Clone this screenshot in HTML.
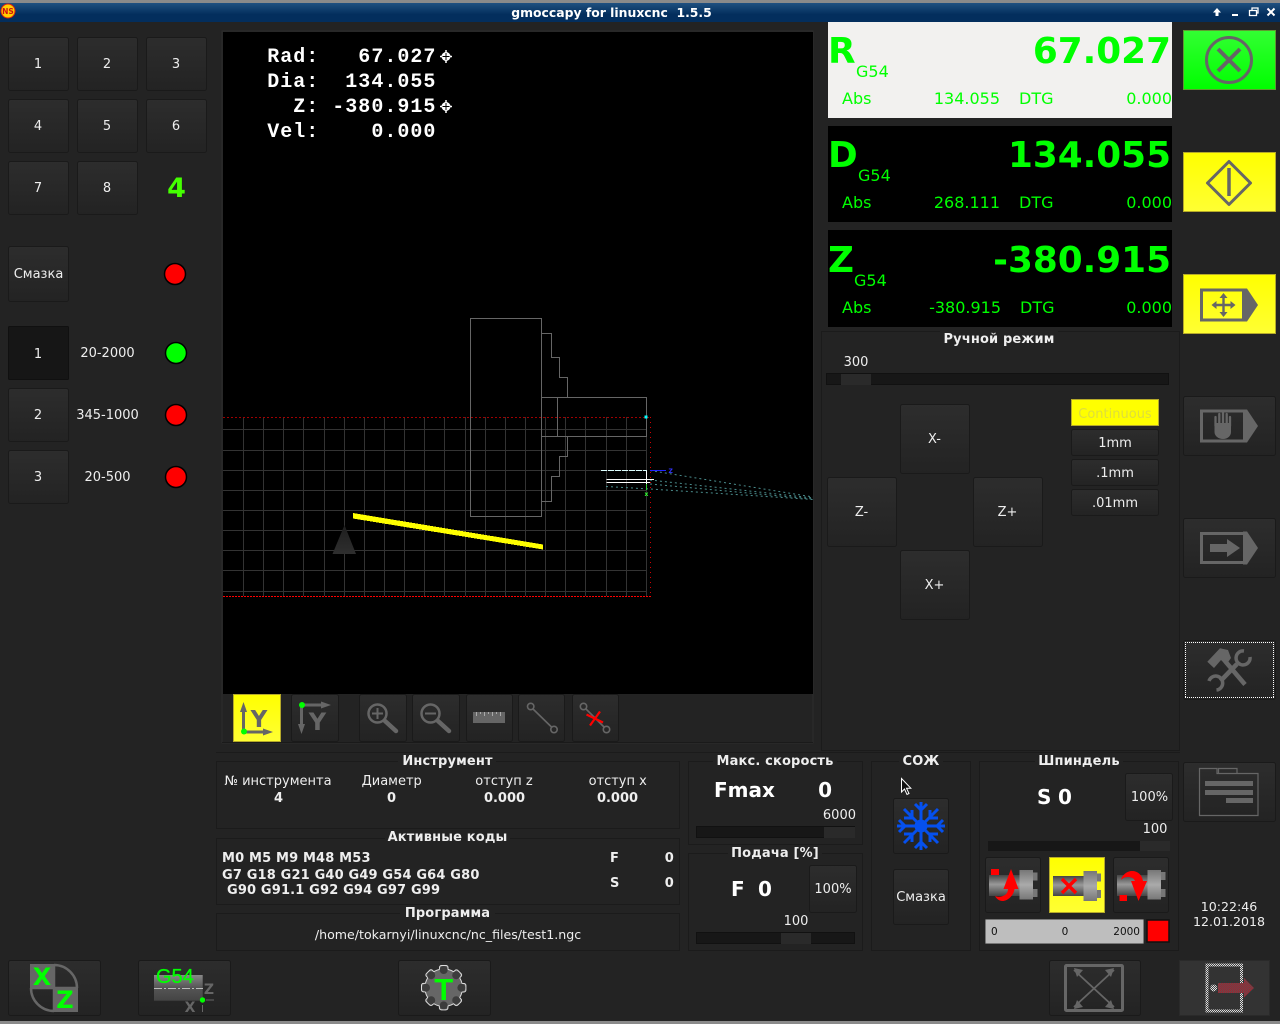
<!DOCTYPE html>
<html><head><meta charset="utf-8"><title>gmoccapy for linuxcnc</title>
<style>
html,body{margin:0;padding:0;background:#232323;width:1280px;height:1024px;overflow:hidden}
svg{display:block;font-family:"DejaVu Sans","Liberation Sans",sans-serif}
.t{font-size:13px;fill:#eee}
.m{text-anchor:middle}
.e{text-anchor:end}
.b{font-weight:bold}
.h{font-size:13px;font-weight:bold;fill:#eee;text-anchor:middle;letter-spacing:.15px}
.btn{fill:url(#bg);stroke:#1a1a1a;stroke-width:1}
.fr{fill:none;stroke:#1b1b1b;stroke-width:1}
.big{font-size:35.8px;font-weight:bold;fill:#0f0}
.sm{font-size:16px;fill:#0f0}
.ab{font-size:16px;fill:#0f0}
.ov{font-family:"Liberation Mono",monospace;font-size:20px;font-weight:bold;fill:#fff;letter-spacing:1px;white-space:pre}
.i{fill:#666}
.is{fill:none;stroke:#666}
</style></head><body>
<svg width="1280" height="1024" viewBox="0 0 1280 1024" xmlns="http://www.w3.org/2000/svg">
<defs>
<linearGradient id="bg" x1="0" y1="0" x2="0" y2="1"><stop offset="0" stop-color="#2d2d2d"/><stop offset="1" stop-color="#232323"/></linearGradient>
<linearGradient id="title" x1="0" y1="0" x2="0" y2="1"><stop offset="0" stop-color="#1f5080"/><stop offset=".6" stop-color="#032e5d"/><stop offset="1" stop-color="#032e5d"/></linearGradient>
<linearGradient id="gr" x1="0" y1="0" x2="0" y2="1"><stop offset="0" stop-color="#3f3"/><stop offset="1" stop-color="#0f0"/></linearGradient>
<linearGradient id="ye" x1="0" y1="0" x2="0" y2="1"><stop offset="0" stop-color="#ff0"/><stop offset="1" stop-color="#ff3"/></linearGradient>
<linearGradient id="cyl" x1="0" y1="0" x2="0" y2="1"><stop offset="0" stop-color="#444"/><stop offset=".45" stop-color="#999"/><stop offset="1" stop-color="#444"/></linearGradient>
<linearGradient id="disc" x1="0" y1="0" x2="0" y2="1"><stop offset="0" stop-color="#777"/><stop offset=".5" stop-color="#aaa"/><stop offset="1" stop-color="#777"/></linearGradient>
<linearGradient id="g54" x1="0" y1="0" x2="0" y2="1"><stop offset="0" stop-color="#888"/><stop offset=".5" stop-color="#555"/><stop offset="1" stop-color="#444"/></linearGradient>
<linearGradient id="cone" x1="0" y1="0" x2="0" y2="1"><stop offset="0" stop-color="#1e1e1e"/><stop offset="1" stop-color="#2e2e2e"/></linearGradient>
<pattern id="chk" width="2" height="2" patternUnits="userSpaceOnUse"><rect width="2" height="2" fill="#444"/><rect width="1" height="1" fill="#ddd"/><rect x="1" y="1" width="1" height="1" fill="#ddd"/></pattern>
<pattern id="chr" width="2" height="2" patternUnits="userSpaceOnUse"><rect width="2" height="2" fill="#555"/><rect width="1" height="1" fill="#b01828"/><rect x="1" y="1" width="1" height="1" fill="#b01828"/></pattern>
</defs>

<rect width="1280" height="1024" fill="#232323"/>
<!-- title bar -->
<rect width="1280" height="3" fill="#8a8a8a"/>
<rect y="3" width="1280" height="19" fill="url(#title)"/>
<circle cx="8" cy="11" r="7" fill="#ffd000" stroke="#e02010" stroke-width="1"/>
<text x="8" y="14" font-size="7.500" font-weight="bold" fill="#d01010" text-anchor="middle">NS</text>
<text x="611.500" y="17" font-size="12.400px" font-weight="bold" fill="#fff" text-anchor="middle" style="white-space:pre">gmoccapy for linuxcnc  1.5.5</text>
<path d="M1217 8l4 4.500h-2.500v3.500h-3v-3.500h-2.500z" fill="#fff"/>
<rect x="1232" y="14" width="6" height="2" fill="#fff"/>
<path d="M1249.500 10.500h7v5h-7zM1252 10.500v-2.500h6v5h-1.500" fill="none" stroke="#fff" stroke-width="1.300"/>
<path d="M1267.500 8.500l7 7M1274.500 8.500l-7 7" stroke="#fff" stroke-width="2"/>

<!-- left buttons -->
<g class="btn">
<rect x="8.500" y="37.500" width="60" height="53" rx="2"/><rect x="77.500" y="37.500" width="60" height="53" rx="2"/><rect x="146.500" y="37.500" width="60" height="53" rx="2"/>
<rect x="8.500" y="99.500" width="60" height="53" rx="2"/><rect x="77.500" y="99.500" width="60" height="53" rx="2"/><rect x="146.500" y="99.500" width="60" height="53" rx="2"/>
<rect x="8.500" y="161.500" width="60" height="53" rx="2"/><rect x="77.500" y="161.500" width="60" height="53" rx="2"/>
<rect x="8.500" y="246.500" width="60" height="55" rx="2"/>
<rect x="8.500" y="388.500" width="60" height="53" rx="2"/><rect x="8.500" y="450.500" width="60" height="53" rx="2"/>
</g>
<rect x="8.500" y="326.500" width="60" height="53" rx="1" fill="#161616" stroke="#101010"/>
<g class="t m">
<text x="38" y="68">1</text><text x="107" y="68">2</text><text x="176" y="68">3</text>
<text x="38" y="130">4</text><text x="107" y="130">5</text><text x="176" y="130">6</text>
<text x="38" y="192">7</text><text x="107" y="192">8</text>
<text x="38.500" y="278">Смазка</text>
<text x="38" y="358">1</text><text x="38" y="419">2</text><text x="38" y="481">3</text>
<text x="107.500" y="357">20-2000</text><text x="107.500" y="419">345-1000</text><text x="107.500" y="481">20-500</text>
</g>
<text x="176.500" y="197" font-size="27px" font-weight="bold" fill="#4f0" text-anchor="middle">4</text>
<g stroke="#000" stroke-width="1.500">
<circle cx="175" cy="274" r="10.500" fill="#f00"/>
<circle cx="176" cy="353" r="10.500" fill="#0f0"/>
<circle cx="176" cy="415" r="10.500" fill="#f00"/>
<circle cx="176" cy="477" r="10.500" fill="#f00"/>
</g>

<!-- viewport -->
<rect x="222" y="31" width="591" height="712" fill="none" stroke="#2c2c2c"/>
<rect x="223" y="32" width="590" height="662" fill="#000"/>
<path shape-rendering="crispEdges" stroke="#333" fill="none" d="M243.500 417V596M263.500 417V596M283.500 417V596M303.500 417V596M324.500 417V596M344.500 417V596M364.500 417V596M384.500 417V596M404.500 417V596M424.500 417V596M444.500 417V596M465.500 417V596M485.500 417V596M505.500 417V596M525.500 417V596M545.500 417V596M565.500 417V596M585.500 417V596M606.500 417V596M626.500 417V596M646.500 417V596M223 429.500H647M223 450.500H647M223 470.500H647M223 490.500H647M223 510.500H647M223 530.500H647M223 550.500H647M223 570.500H647M223 591.500H647"/>
<path shape-rendering="crispEdges" fill="none" stroke="#a00000" stroke-dasharray="2 2" d="M223 417.500H650.500"/>
<path shape-rendering="crispEdges" fill="none" stroke="#d00000" stroke-dasharray="1 4" d="M650.500 417V596"/>
<path shape-rendering="crispEdges" fill="none" stroke="#ff0000" stroke-dasharray="2 1" d="M223 596.500H651"/>
<path shape-rendering="crispEdges" fill="none" stroke="#666" d="M470.500 318.500H541.500V516.500H470.500ZM541.500 333.500H551.500V357.500H559.500V377.500H567.500V397.500M541.500 397.500H646.500V436.500H541.500M557.500 397.500V436.500M567.500 436.500V456.500H559.500V476.500H551.500V501.500H541.500"/>
<rect x="644.500" y="415.500" width="3" height="3" fill="#0ff"/>
<polygon points="353,513 543,544.500 543,549.500 353,518.500" fill="#ff0" shape-rendering="crispEdges"/>
<polygon points="344.500,525 356,554 332.500,554" fill="url(#cone)"/>
<g fill="none" stroke-width="1" stroke-dasharray="2 3" stroke="#4a8c8c">
<path d="M650 470.500L813 497"/><path d="M650 480L813 498"/><path d="M650 484L813 499"/><path d="M606 486.500L650 489L813 499.500"/>
</g>
<path shape-rendering="crispEdges" fill="none" stroke="#dff" stroke-dasharray="6 1" d="M601 470.500H647"/>
<path shape-rendering="crispEdges" fill="none" stroke="#fff" d="M646.500 471V484M606.500 479.500H654M606.500 482.500H650"/>
<path shape-rendering="crispEdges" fill="none" stroke="#3c3" d="M646.500 484V490"/>
<path shape-rendering="crispEdges" fill="none" stroke="#22f" d="M650 470.500H666"/>
<text x="668.500" y="473" font-size="6px" fill="#33f" font-weight="bold">Z</text>
<text x="644.500" y="496" font-size="6px" fill="#3f3" font-weight="bold">x</text>
<text class="ov" x="267.300" y="62" xml:space="preserve">Rad:   67.027</text>
<text class="ov" x="267.300" y="87" xml:space="preserve">Dia:  134.055</text>
<text class="ov" x="267.300" y="112" xml:space="preserve">  Z: -380.915</text>
<text class="ov" x="267.300" y="137" xml:space="preserve">Vel:    0.000</text>
<g fill="#fff"><circle cx="446" cy="56.500" r="4.500"/><circle cx="446" cy="106.500" r="4.500"/></g>
<path d="M446 50v13M440 56.500h12M446 100v13M440 106.500h12" stroke="#fff" stroke-width="1.500"/>
<path d="M446 53v7M442.500 56.500h7M446 103v7M442.500 106.500h7" stroke="#000" stroke-width="1"/>

<!-- view toolbar -->
<path shape-rendering="crispEdges" stroke="#1a1a1a" d="M222 742.500H813"/>
<rect x="233.500" y="694.500" width="47" height="47" fill="url(#ye)" stroke="#b5a92a"/>
<g class="btn">
<rect x="291.500" y="694.500" width="47" height="47" rx="2"/><rect x="359.500" y="694.500" width="47" height="47" rx="2"/><rect x="412.500" y="694.500" width="47" height="47" rx="2"/><rect x="466.500" y="694.500" width="46" height="47" rx="2"/><rect x="518.500" y="694.500" width="46" height="47" rx="2"/><rect x="572.500" y="694.500" width="46" height="47" rx="2"/>
</g>
<!-- Y icons -->
<path d="M243.500 731V709" stroke="#666" stroke-width="3"/><path d="M243.500 702l3.500 10h-7z" class="i"/>
<path d="M244 732h22" stroke="#666" stroke-width="3"/><path d="M273 732l-10 3.500v-7z" class="i"/>
<text x="259" y="727" font-size="23px" font-weight="bold" fill="#666" text-anchor="middle">Y</text>
<circle cx="244" cy="731.500" r="3" fill="#0f0"/>
<path d="M302 705h21" stroke="#666" stroke-width="3"/><path d="M331 705l-10 3.500v-7z" class="i"/>
<path d="M301.500 705v21" stroke="#666" stroke-width="3"/><path d="M301.500 734l-3.500-10h7z" class="i"/>
<text x="317.500" y="730" font-size="24px" font-weight="bold" fill="#666" text-anchor="middle">Y</text>
<circle cx="302" cy="705" r="3" fill="#0f0"/>
<!-- zoom -->
<g fill="none" stroke="#666">
<circle cx="377.500" cy="713.500" r="9" stroke-width="2.500"/><path d="M372 713.500h11M377.500 708v11" stroke-width="2"/><path d="M385 721l11 10" stroke-width="4.500" stroke-linecap="round"/>
<circle cx="430.500" cy="713.500" r="9" stroke-width="2.500"/><path d="M425 713.500h11" stroke-width="2"/><path d="M438 721l11 10" stroke-width="4.500" stroke-linecap="round"/>
<circle cx="530.700" cy="706.500" r="3.200" stroke-width="1.600"/><circle cx="554" cy="729.500" r="3.200" stroke-width="1.600"/><path d="M533 709l18.500 18" stroke-width="1.600"/>
<circle cx="583.500" cy="706.500" r="3.200" stroke-width="1.600"/><circle cx="606.500" cy="729.500" r="3.200" stroke-width="1.600"/><path d="M586 709l18 18" stroke-width="1.600"/>
</g>
<rect x="473" y="712" width="32" height="11" class="i"/>
<path d="M476.500 712v4M480.500 712v2M484.500 712v4M488.500 712v2M492.500 712v4M496.500 712v2M500.500 712v4" stroke="#aaa" stroke-width="1"/>
<path d="M586.500 714.500l16.500 8M600 711.500l-10 14" stroke="#f00" stroke-width="2.200"/>

<!-- DRO -->
<rect x="828" y="22" width="344" height="96" fill="#f2f1ef"/>
<rect x="828" y="126" width="344" height="96" fill="#000"/>
<rect x="828" y="230" width="344" height="97" fill="#000"/>
<text class="big" x="828" y="63">R</text><text class="big e" x="1171" y="63">67.027</text>
<text class="sm" x="856" y="77">G54</text><text class="ab" x="842" y="104">Abs</text><text class="ab e" x="1000" y="104">134.055</text><text class="ab" x="1019" y="104">DTG</text><text class="ab e" x="1172" y="104">0.000</text>
<text class="big" x="828" y="167">D</text><text class="big e" x="1171" y="167">134.055</text>
<text class="sm" x="858" y="181">G54</text><text class="ab" x="842" y="208">Abs</text><text class="ab e" x="1000" y="208">268.111</text><text class="ab" x="1019" y="208">DTG</text><text class="ab e" x="1172" y="208">0.000</text>
<text class="big" x="828" y="272">Z</text><text class="big e" x="1171" y="272">-380.915</text>
<text class="sm" x="854" y="286">G54</text><text class="ab" x="842" y="313">Abs</text><text class="ab e" x="1001" y="313">-380.915</text><text class="ab" x="1020" y="313">DTG</text><text class="ab e" x="1172" y="313">0.000</text>

<!-- right column -->
<rect x="1183.500" y="30.500" width="92" height="59" fill="url(#gr)" stroke="#5f9a30"/>
<circle cx="1229" cy="60" r="22.500" fill="none" stroke="#666" stroke-width="3"/>
<path d="M1218 49l22 22M1240 49l-22 22" stroke="#666" stroke-width="4"/>
<rect x="1183.500" y="152.500" width="92" height="59" fill="url(#ye)" stroke="#b5a92a"/>
<path d="M1229 161.500L1250.500 183L1229 204.500L1207.500 183Z" fill="none" stroke="#666" stroke-width="3" stroke-linejoin="round"/>
<path d="M1229 168V196" stroke="#666" stroke-width="3.500"/>
<rect x="1183.500" y="274.500" width="92" height="59" fill="url(#ye)" stroke="#b5a92a"/>
<path d="M1201.500 290h42v30h-42z" fill="none" stroke="#666" stroke-width="3"/>
<path d="M1243 288.500h4l11 16.500-11 16.500h-4z" class="i"/>
<path d="M1223.500 293l4 5h-2.800v5.800h5.800v-2.800l5 4-5 4v-2.800h-5.800v5.800h2.800l-4 5-4-5h2.800v-5.800h-5.800v2.800l-5-4 5-4v2.800h5.800v-5.800h-2.800z" class="i"/>

<g class="btn">
<rect x="1183.500" y="396.500" width="92" height="59" rx="2"/><rect x="1183.500" y="518.500" width="92" height="59" rx="2"/><rect x="1183.500" y="640.500" width="92" height="59" rx="2"/><rect x="1183.500" y="762.500" width="92" height="59" rx="2"/>
</g>
<path d="M1201.500 411h43v30h-43z" fill="none" stroke="#666" stroke-width="3"/>
<path d="M1243 409.500h4l11 16.500-11 16.500h-4z" class="i"/>
<!-- hand -->
<path d="M1214.500 423h16.500v9c0 4-3.500 7-8 7s-8.500-3-8.500-7z" class="i"/>
<path d="M1215.500 426v-9M1219.300 426v-12M1223 426v-13M1226.700 426v-12M1230 426v-9" stroke="#666" stroke-width="2.300" fill="none" stroke-linecap="round"/>
<path d="M1201.500 533.500h43v29h-43z" fill="none" stroke="#666" stroke-width="3"/>
<path d="M1243 531.500h4l11 16.500-11 16.500h-4z" class="i"/>
<path d="M1210 544h17v-5l13 9-13 9v-5h-17z" class="i"/>

<!-- focus dotted -->
<path shape-rendering="crispEdges" fill="none" stroke="#fff" stroke-dasharray="1 1" d="M1185 642.500H1274M1185 697.500H1274M1185.500 642V698M1273.500 642V698"/>
<!-- tools -->
<path d="M1225 661L1245 684.500" stroke="#666" stroke-width="4.500" fill="none"/>
<path d="M1207.300 661.700L1220 648.300 1228 650 1231 658 1226 665 1221 660 1214 668z" class="i"/>
<path d="M1237 664L1220.500 681" stroke="#666" stroke-width="4.500" fill="none"/>
<path d="M1244 651A7 7 0 1 0 1250 657" fill="none" stroke="#666" stroke-width="3.500"/>
<path d="M1209 681A7 7 0 1 1 1216.500 690" fill="none" stroke="#666" stroke-width="3.500"/>
<!-- folder -->
<path d="M1199.500 815.500V768.500H1217V773.500H1258V815.500Z M1218.500 773V768.500H1237V773" fill="none" stroke="#666" stroke-width="1.200"/>
<rect x="1205" y="781" width="48" height="5" class="i"/><rect x="1205" y="790" width="48" height="5" class="i"/><rect x="1226" y="798" width="27" height="5" class="i"/>

<text class="t" style="font-size:12.600px" x="1229" y="911" text-anchor="middle">10:22:46</text>
<text class="t" style="font-size:12.600px" x="1229" y="926" text-anchor="middle">12.01.2018</text>

<!-- jog panel -->
<rect x="821.500" y="331.500" width="358" height="419" class="fr"/>
<rect x="940" y="331" width="118" height="8" fill="#232323"/>
<text class="h" x="999" y="343">Ручной режим</text>
<text class="t m" x="856" y="366">300</text>
<rect x="826.500" y="373.500" width="342" height="11" fill="#171717" stroke="#111"/>
<rect x="841" y="374" width="30" height="11" fill="#2a2a2a"/>
<g class="btn">
<rect x="900.500" y="404.500" width="69" height="69" rx="2"/><rect x="827.500" y="477.500" width="69" height="69" rx="2"/><rect x="973.500" y="477.500" width="69" height="69" rx="2"/><rect x="900.500" y="550.500" width="69" height="69" rx="2"/>
<rect x="1071.500" y="429.500" width="87" height="26" rx="2"/><rect x="1071.500" y="459.500" width="87" height="26" rx="2"/><rect x="1071.500" y="489.500" width="87" height="26" rx="2"/>
</g>
<rect x="1071.500" y="399.500" width="87" height="26" fill="#ff0" stroke="#b5a92a"/>
<g class="t m">
<text x="934.500" y="443">X-</text><text x="861.500" y="516">Z-</text><text x="1007.500" y="516">Z+</text><text x="934.500" y="589">X+</text>
<text x="1115" y="418" style="fill:#dede3c">Continuous</text>
<text x="1115" y="447">1mm</text><text x="1115" y="477">.1mm</text><text x="1115" y="507">.01mm</text>
</g>

<!-- lower panels -->
<path shape-rendering="crispEdges" stroke="#1b1b1b" d="M216 752.500H1180"/>
<rect x="216.500" y="761.500" width="463" height="67" class="fr"/>
<rect x="216.500" y="838.500" width="463" height="66" class="fr"/>
<rect x="216.500" y="913.500" width="463" height="37" class="fr"/>
<rect x="688.500" y="761.500" width="174" height="83" class="fr"/>
<rect x="688.500" y="853.500" width="174" height="97" class="fr"/>
<rect x="871.500" y="761.500" width="99" height="189" class="fr"/>
<rect x="979.500" y="761.500" width="199" height="189" class="fr"/>
<g fill="#232323">
<rect x="398" y="755" width="98" height="10"/><rect x="385" y="832" width="125" height="10"/><rect x="400" y="908" width="95" height="10"/>
<rect x="713" y="755" width="124" height="10"/><rect x="728" y="848" width="94" height="10"/><rect x="899" y="755" width="44" height="10"/><rect x="1035" y="755" width="88" height="10"/>
</g>
<text class="h" x="447.500" y="765">Инструмент</text>
<text class="h" x="447.500" y="841">Активные коды</text>
<text class="h" x="447.500" y="917">Программа</text>
<text class="h" x="775" y="765">Макс. скорость</text>
<text class="h" x="775" y="857">Подача [%]</text>
<text class="h" x="921" y="765">СОЖ</text>
<text class="h" x="1079" y="765">Шпиндель</text>

<g class="t m">
<text x="278" y="785">№ инструмента</text><text x="391.700" y="785">Диаметр</text><text x="504" y="785">отступ z</text><text x="617.700" y="785">отступ x</text>
</g>
<g class="t m b">
<text x="278.500" y="802">4</text><text x="391.500" y="802">0</text><text x="504.500" y="802">0.000</text><text x="617.500" y="802">0.000</text>
</g>
<g class="t b" style="letter-spacing:.16px">
<text x="222" y="862">M0 M5 M9 M48 M53</text>
<text x="222" y="879">G7 G18 G21 G40 G49 G54 G64 G80</text>
<text x="227" y="894">G90 G91.1 G92 G94 G97 G99</text>
<text x="610" y="862">F</text><text x="610" y="887">S</text>
<text class="e" x="674" y="862">0</text><text class="e" x="674" y="887">0</text>
</g>
<text class="t m" style="font-size:12.600px" x="448" y="939">/home/tokarnyi/linuxcnc/nc_files/test1.ngc</text>

<!-- fmax -->
<text x="714" y="797" font-size="20px" font-weight="bold" fill="#fff">Fmax</text>
<text x="832" y="797" font-size="20px" font-weight="bold" fill="#fff" text-anchor="end">0</text>
<text class="t e" x="856" y="819">6000</text>
<rect x="696.500" y="826.500" width="158" height="11" fill="#171717" stroke="#111"/>
<rect x="824" y="827" width="31" height="11" fill="#2a2a2a"/>
<text x="731" y="896" font-size="20px" font-weight="bold" fill="#fff">F</text>
<text x="765" y="896" font-size="20px" font-weight="bold" fill="#fff" text-anchor="middle">0</text>
<rect x="809.500" y="865.500" width="47" height="47" rx="2" class="btn"/>
<text class="t m" x="833" y="893">100%</text>
<text class="t m" x="796" y="925">100</text>
<rect x="696.500" y="932.500" width="158" height="11" fill="#171717" stroke="#111"/>
<rect x="781" y="933" width="30" height="11" fill="#2a2a2a"/>

<!-- coolant -->
<rect x="893.500" y="798.500" width="55" height="55" rx="2" class="btn"/>
<rect x="893.500" y="869.500" width="55" height="55" rx="2" class="btn"/>
<text class="t m" x="921" y="901">Смазка</text>
<g stroke="#0550ee" stroke-width="3" fill="none">
<path d="M921 802v48M897 826h48M904 809l34 34M938 809l-34 34"/>
<path d="M915 804l6 6 6-6M915 848l6-6 6 6M899 820l6 6-6 6M943 820l-6 6 6 6M904 818l8 0 0-8M938 818l-8 0 0-8M904 834l8 0 0 8M938 834l-8 0 0 8"/>
</g>
<circle cx="921" cy="826" r="6.500" fill="#0550ee"/>
<path d="M901.500 778.500v13.500l3-3 2.500 5.500 2-1-2.500-5.300h4.300z" fill="#111" stroke="#fff" stroke-width="1"/>

<!-- spindle -->
<text x="1037" y="804" font-size="20px" font-weight="bold" fill="#fff">S</text>
<text x="1065" y="804" font-size="20px" font-weight="bold" fill="#fff" text-anchor="middle">0</text>
<rect x="1125.500" y="773.500" width="47" height="47" rx="2" class="btn"/>
<text class="t m" x="1149.500" y="801">100%</text>
<text class="t m" x="1155" y="833">100</text>
<rect x="988" y="841" width="182" height="10" fill="#171717"/>
<rect x="1140" y="841" width="30" height="10" fill="#2a2a2a"/>
<rect x="985.500" y="857.500" width="55" height="55" rx="2" class="btn"/>
<rect x="1049.500" y="857.500" width="55" height="55" fill="url(#ye)" stroke="#b5a92a"/>
<rect x="1113.500" y="857.500" width="55" height="55" rx="2" class="btn"/>
<!-- spindle 1 -->
<rect x="989" y="875" width="30.500" height="21" fill="url(#cyl)"/><rect x="1019.500" y="870" width="13.500" height="29.500" fill="url(#disc)"/><rect x="1033" y="872.500" width="4.500" height="8" fill="#777"/><rect x="1033" y="889" width="4.500" height="8" fill="#777"/>
<rect x="991" y="869" width="8" height="6" fill="#f00"/>
<path d="M1011 869l7.500 20h-4c-1 7-7 12-12 12-3 0-6-2-7.500-5 5 2 13 0 13-7h-4.500z" fill="#f00"/>
<!-- spindle 2 -->
<rect x="1053" y="876" width="30.500" height="20" fill="url(#cyl)"/><rect x="1083.500" y="871" width="13.500" height="30" fill="url(#disc)"/><rect x="1097" y="873.500" width="4" height="8" fill="#777"/><rect x="1097" y="890" width="4" height="8" fill="#777"/>
<path d="M1062 879l14 14M1076 879l-14 14" stroke="#f00" stroke-width="3.500"/>
<!-- spindle 3 -->
<rect x="1117" y="875" width="30.500" height="21" fill="url(#cyl)"/><rect x="1147.500" y="870" width="13.500" height="29.500" fill="url(#disc)"/><rect x="1161" y="872" width="4.500" height="8" fill="#777"/><rect x="1161" y="889" width="4.500" height="8" fill="#777"/>
<rect x="1119.500" y="895" width="7.500" height="6" fill="#f00"/>
<path d="M1138.500 901l-7.500-20h4c-1-3-4-4-7-4-3 0-5 1-7 3 1-5 6-9 11-9 6 0 10 4 11 10h4z" fill="#f00"/>
<rect x="985.500" y="919.500" width="158" height="24" rx="1" fill="#bebebe" stroke="#777"/>
<g font-size="10.500px" fill="#111"><text x="991" y="935">0</text><text x="1065" y="935" text-anchor="middle">0</text><text x="1140" y="935" text-anchor="end">2000</text></g>
<rect x="1147" y="920" width="22" height="22" fill="#f00" stroke="#111" stroke-width="1.500"/>

<!-- bottom buttons -->
<g class="btn">
<rect x="8.500" y="960.500" width="92" height="55" rx="2"/><rect x="138.500" y="960.500" width="92" height="55" rx="2"/><rect x="398.500" y="960.500" width="92" height="55" rx="2"/><rect x="1049.500" y="960.500" width="91" height="55" rx="2"/>
</g>
<rect x="1179.500" y="960.500" width="90" height="55" fill="#333" stroke="#2a2a2a"/>
<!-- XZ -->
<rect x="30" y="964" width="24" height="24" class="i"/><rect x="54" y="988" width="24" height="24" class="i"/>
<path d="M54 965a23 23 0 0 1 23 23M54 1011a23 23 0 0 1-23-23M54 964v47M30 988h47" fill="none" stroke="#666" stroke-width="2.500"/>
<text x="42" y="985" font-size="24px" font-weight="bold" fill="#0f0" text-anchor="middle">X</text>
<text x="65" y="1008" font-size="24px" font-weight="bold" fill="#0f0" text-anchor="middle">Z</text>
<!-- G54 -->
<rect x="154" y="975" width="48.700" height="25.700" fill="url(#g54)"/>
<path d="M154 988.500h49" stroke="#bbb" stroke-dasharray="8 2 2 2"/>
<text x="156" y="983" font-family="Liberation Sans" font-size="20px" fill="#0f0" stroke="#0f0" stroke-width=".3">G54</text>
<text x="209" y="994" font-size="14px" font-weight="bold" fill="#666" text-anchor="middle">Z</text>
<text x="190" y="1012" font-size="14px" font-weight="bold" fill="#666" text-anchor="middle">X</text>
<path d="M206 1000h8M202.500 1005v7" stroke="#666"/>
<circle cx="202.500" cy="1000" r="2.700" fill="#0f0"/>
<!-- gear -->
<g fill="#666" stroke="#ddd" stroke-width="1">
<rect x="439.500" y="965.500" width="8.500" height="8" rx="2"/>
<rect x="439.500" y="965.500" width="8.500" height="8" rx="2" transform="rotate(45 443.700 987.700)"/>
<rect x="439.500" y="965.500" width="8.500" height="8" rx="2" transform="rotate(90 443.700 987.700)"/>
<rect x="439.500" y="965.500" width="8.500" height="8" rx="2" transform="rotate(135 443.700 987.700)"/>
<rect x="439.500" y="965.500" width="8.500" height="8" rx="2" transform="rotate(180 443.700 987.700)"/>
<rect x="439.500" y="965.500" width="8.500" height="8" rx="2" transform="rotate(225 443.700 987.700)"/>
<rect x="439.500" y="965.500" width="8.500" height="8" rx="2" transform="rotate(270 443.700 987.700)"/>
<rect x="439.500" y="965.500" width="8.500" height="8" rx="2" transform="rotate(315 443.700 987.700)"/>
</g>
<circle cx="443.700" cy="987.700" r="18.500" fill="#666"/>
<circle cx="443.700" cy="987.700" r="18.800" fill="none" stroke="#ddd" stroke-width="1" stroke-dasharray="6.260 8.500" stroke-dashoffset="-4.250"/>
<g fill="#3c3c3c"><circle cx="443.700" cy="970" r="4"/><circle cx="443.700" cy="1005.400" r="4"/><circle cx="426" cy="987.700" r="4"/><circle cx="461.400" cy="987.700" r="4"/><circle cx="431.200" cy="975.200" r="4"/><circle cx="456.200" cy="975.200" r="4"/><circle cx="431.200" cy="1000.200" r="4"/><circle cx="456.200" cy="1000.200" r="4"/></g>
<text x="443.700" y="1000" font-family="Liberation Sans" font-size="31px" font-weight="bold" fill="#0f0" text-anchor="middle">T</text>
<!-- fullscreen -->
<rect x="1065.500" y="965.500" width="57" height="45" rx="1" fill="none" stroke="#666" stroke-width="3"/>
<path d="M1074 970l40 37M1114 970l-40 37" stroke="#666" stroke-width="1.800"/>
<path d="M1074 968l9 2-6 7zM1114 968l-9 2 6 7zM1074 1009l9-2-6-7zM1114 1009l-9-2 6-7z" class="i"/>
<!-- exit -->
<path d="M1207 965h34.500v46h-34.500z" fill="none" stroke="url(#chk)" stroke-width="3"/>
<path d="M1218 983h26v-5l10 10-10 9.500v-4.500h-26z" fill="url(#chr)"/>
<circle cx="1213.700" cy="988" r="3.500" fill="url(#chk)"/>

<rect y="1021" width="1280" height="3" fill="#8a8a8a"/>
</svg>
</body></html>
